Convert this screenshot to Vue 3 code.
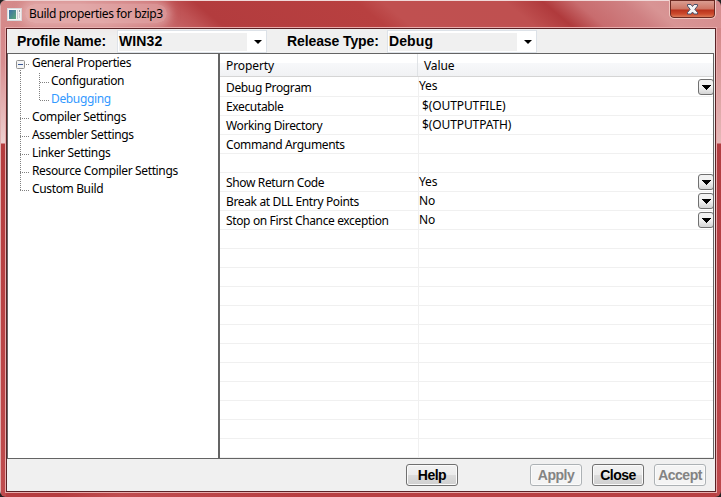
<script setup>
const tree = [
  { t: 'General Properties', k: 'root' },
  { t: 'Configuration', k: 'sub' },
  { t: 'Debugging', k: 'sub', last: true, sel: true },
  { t: 'Compiler Settings', k: 'top' },
  { t: 'Assembler Settings', k: 'top' },
  { t: 'Linker Settings', k: 'top' },
  { t: 'Resource Compiler Settings', k: 'top' },
  { t: 'Custom Build', k: 'top', last: true },
]
const rows = [
  { p: 'Debug Program', v: 'Yes', d: true },
  { p: 'Executable', v: '$(OUTPUTFILE)' },
  { p: 'Working Directory', v: '$(OUTPUTPATH)' },
  { p: 'Command Arguments', v: '' },
  { p: '', v: '' },
  { p: 'Show Return Code', v: 'Yes', d: true },
  { p: 'Break at DLL Entry Points', v: 'No', d: true },
  { p: 'Stop on First Chance exception', v: 'No', d: true },
  ...Array.from({ length: 12 }, () => ({ p: '', v: '' })),
]
</script>

<template>
  <div class="window">
    <header class="title">
      <svg class="appicon" width="15" height="13" viewBox="0 0 15 13">
        <defs>
          <linearGradient id="pane" x1="0" y1="0" x2="1" y2="1">
            <stop offset="0" stop-color="#3f6fa8" /><stop offset="1" stop-color="#58a878" />
          </linearGradient>
        </defs>
        <rect x=".5" y=".5" width="14" height="12" fill="#f5f7f8" stroke="#d8dcdf" />
        <rect x="2" y="2" width="7" height="9" fill="url(#pane)" />
        <rect x="10" y="2" width="1" height="9" fill="#c3ccd2" />
        <rect x="12" y="2" width="1" height="2" fill="#8a98a5" />
        <rect x="12" y="5" width="1" height="5" fill="#ced4d8" />
      </svg>
      <span class="caption">Build properties for bzip3</span>
      <button class="x" aria-label="Close window">
        <svg width="13" height="11" viewBox="0 0 13 11">
          <path d="M1.5 .5h3.500l1.500 2 1.500-2h3.500v1.500L8.800 5.300l2.700 3.200V10H8L6.500 8 5 10H1.500V8.500L4.200 5.300 1.500 2z" fill="#f4f4f4" stroke="#4c5068" />
        </svg>
      </button>
    </header>

    <main class="client">
      <div class="bar">
        <span class="lbl l1">Profile Name:</span>
        <div class="combo"><span class="field">WIN32</span><i class="arr"></i></div>
        <span class="lbl l2">Release Type:</span>
        <div class="combo"><span class="field">Debug</span><i class="arr"></i></div>
      </div>

      <div class="panes">
        <nav class="tree">
          <div v-for="n in tree" :key="n.t" class="node">
            <svg v-if="n.k === 'root'" class="guide" width="24" height="18" viewBox="0 0 24 18">
              <path d="M18 9.500h3M12.500 15v3" stroke="#808080" stroke-dasharray="1 1" />
              <rect x="8.500" y="5.500" width="8" height="8" rx="1" fill="#f4f4f4" stroke="#919191" />
              <path d="M10 9.500h5" stroke="#3b5a9a" />
            </svg>
            <svg v-else-if="n.k === 'sub'" class="guide" width="43" height="18" viewBox="0 0 43 18">
              <path d="M12.500 0v18M32 9.500h9" stroke="#808080" stroke-dasharray="1 1" />
              <path :d="n.last ? 'M31.500 0v10' : 'M31.500 0v18'" stroke="#808080" stroke-dasharray="1 1" />
            </svg>
            <svg v-else class="guide" width="24" height="18" viewBox="0 0 24 18">
              <path d="M12 9.500h9" stroke="#808080" stroke-dasharray="1 1" />
              <path :d="n.last ? 'M12.500 0v10' : 'M12.500 0v18'" stroke="#808080" stroke-dasharray="1 1" />
            </svg>
            <span class="name" :class="{ sel: n.sel }">{{ n.t }}</span>
          </div>
        </nav>

        <section class="grid">
          <div class="head"><span class="hp">Property</span><span class="hv">Value</span></div>
          <div v-for="(r, i) in rows" :key="i" class="row">
            <span class="p">{{ r.p }}</span>
            <span class="v" :class="{ indent: !r.d }">{{ r.v }}</span>
            <button v-if="r.d" class="drop" aria-label="Choose"><svg width="9" height="5" viewBox="0 0 9 5"><path d="M0 0h9v1H8v1H7v1H6v1H5v1H4V4H3V3H2V2H1V1H0z" /></svg></button>
          </div>
        </section>
      </div>

      <footer class="foot">
        <button class="btn help">Help</button>
        <button class="btn" disabled>Apply</button>
        <button class="btn">Close</button>
        <button class="btn" disabled>Accept</button>
      </footer>
    </main>
  </div>
</template>

<style>
html, body { margin: 0; overflow: hidden; background: #222; }
</style>
<style scoped>
* { box-sizing: border-box; }
button { margin: 0; padding: 0; }
.window {
  width: 721px; height: 497px; padding: 0 4px 4px 5px;
  font: 12px/18px "Noto Sans", sans-serif; color: #000; letter-spacing: -.36px;
  border-radius: 6px;
  background:
    linear-gradient(#f0d8d8, #f0d8d8) 0 0 / 100% 1px no-repeat,
    linear-gradient(#e0b0b0, #e0b0b0) 0 0 / 1px 100% no-repeat,
    linear-gradient(#d48688 0, #d88e90 35px, #edd0d0 115px, #b43c3e 116px, #bf4c4e) 0 28px / 6px 469px no-repeat,
    linear-gradient(#d48688 0, #e5b8b8 115px, #b13c40 116px, #bd484c) 100% 28px / 5px 469px no-repeat,
    linear-gradient(40deg, #d58a8a 0, #d48888 70px, #c66466 112px, #bf5254 130px, #b33c3e 145px, #b84040 249px, #c05050 266px, #bf5050 345px, #b03a3c 369px, #c86c6e 390px, #cf8082 420px, #d89494 436px, #d68c8e 100%) 0 0 / 100% 28px no-repeat,
    linear-gradient(to right, #b63d40 60px, #c04d50 120px, #b83f42 300px);
}
.title { height: 27px; display: flex; align-items: flex-start; padding-left: 2px; }
.appicon { margin-top: 8px; flex: none; }
.caption {
  margin: 4px 0 0 3px; padding: 0 4px; height: 19px; line-height: 19px; white-space: nowrap;
  border-radius: 10px; background: rgba(240, 200, 200, .5); box-shadow: 0 0 8px 4px rgba(240, 200, 200, .5);
}
.x {
  margin: 0 1px 0 auto; width: 47px; height: 19px; border: 1px solid #f0c6c0; border-top: 0; border-radius: 0 0 5px 5px;
  box-shadow: inset 0 0 0 1px #6b2a22; display: flex; align-items: center; justify-content: center;
  background: linear-gradient(#dca296 0, #cd7564 9px, #b9321c 10px, #cc4a2c 14px, #e08a66);
}
.client {
  width: 712px; height: 466px; border: 1px solid #e8acac; background: #f0f0f0;
  outline: 1px solid #5a2226; outline-offset: -2px; padding: 1px; display: flex; flex-direction: column;
}
.bar { height: 24px; display: flex; font: bold 14px/24px "Liberation Sans", sans-serif; letter-spacing: -.1px; }
.lbl { white-space: nowrap; }
.l1 { width: 110px; padding-left: 10px; }
.l2 { width: 120px; padding-left: 20px; }
.combo { width: 150px; height: 23px; margin-top: 1px; border: 1px solid #dde2e8; background: #fff; display: flex; align-items: center; padding-left: 1px; letter-spacing: .1px; }
.field { width: 128px; height: 18px; line-height: 16px; background: #f0f0f0; }
.arr { width: 0; height: 0; margin-left: 7px; border: 4px solid transparent; border-top-color: #000; border-bottom: 0; }
.panes { height: 406px; width: 707px; flex: none; display: flex; border: 1px solid #646464; }
.tree { width: 210px; padding-top: 1px; background: #fff; }
.node { height: 18px; display: flex; white-space: nowrap; }
.name { line-height: 16px; }
.guide { flex: none; }
.sel { color: #3399ff; }
.grid { flex: 1; min-width: 0; border-left: 2px solid #646464; background: #fff; overflow: hidden; }
.head { height: 23px; display: flex; line-height: 24px; letter-spacing: -.1px; border-bottom: 1px solid #d5d5d5; background: linear-gradient(#fff 9px, #f7f8fa 9px, #f1f2f4); }
.hp { width: 198px; padding-left: 6px; border-right: 1px solid #e0e3e6; }
.hv { padding-left: 6px; }
.row { height: 19px; display: flex; border-bottom: 1px solid #f0f0f0; line-height: 19px; white-space: nowrap; }
.row:nth-child(2) { height: 20px; line-height: 22px; }
.p { width: 199px; flex: none; padding-left: 6px; border-right: 1px solid #f0f0f0; }
.v { flex: 1; line-height: 17px; letter-spacing: -.1px; }
.indent { padding-left: 3px; }
.drop {
  width: 16px; height: 16px; margin: 1px -1px 0 0; border: 1px solid #707070; border-radius: 3px;
  background: linear-gradient(#f2f2f2 50%, #d4d4d4); display: flex; align-items: center; justify-content: center; align-self: flex-start;
}
.row:nth-child(2) .drop { margin-top: 2px; }
.foot { flex: 1; display: flex; align-items: flex-start; gap: 10px; padding: 5px 8px 0 399px; }
.btn {
  width: 52px; height: 22px; border: 1px solid #707070; border-radius: 3px; box-shadow: inset 0 0 0 1px #fbfbfb;
  background: linear-gradient(#f2f2f2, #ebebeb 50%, #dcdcdc 50%, #cfcfcf); font: bold 14px/20px "Liberation Sans", sans-serif; color: #000; letter-spacing: -.5px;
}
.btn:disabled { border-color: #adb2b5; background: #f4f4f4; color: #838383; }
.help { margin-right: 62px; }
</style>
